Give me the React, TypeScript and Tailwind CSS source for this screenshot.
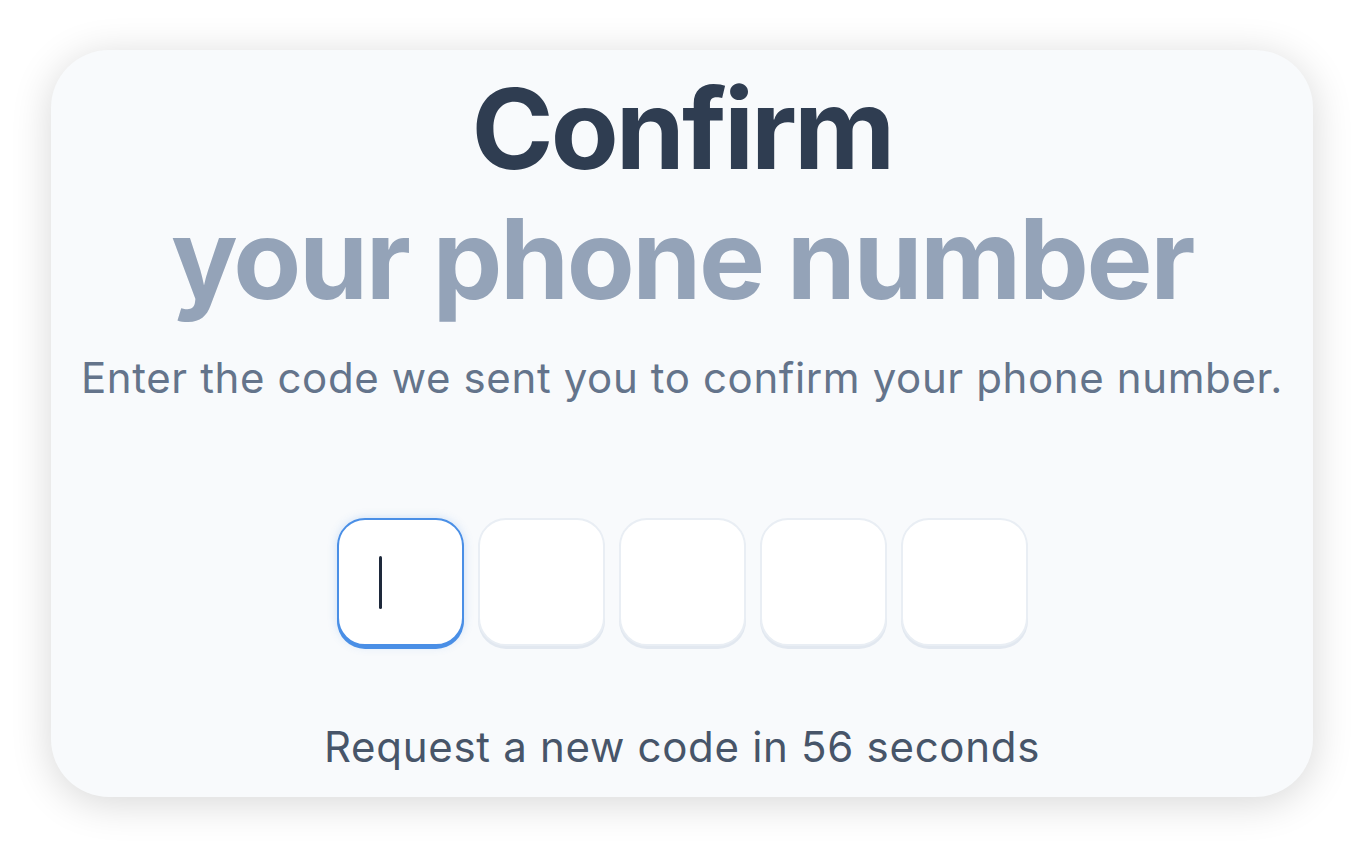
import React from "react";

export default function App() {
  const boxes = [0, 1, 2, 3, 4];
  return (
    <div className="w-[1365px] h-[849px] bg-white px-[51px] pt-[50px]" style={{ fontFamily: "Inter, 'Noto Sans', sans-serif" }}>
      <div className="w-[1262px] h-[747px] bg-[#f8fafc] rounded-[58px] shadow-[0_6px_40px_rgba(0,0,0,0.16)] flex flex-col items-center pt-[14px]">
        <h1 className="text-[111px] leading-[130px] font-bold text-[#2f3d51] tracking-[-3px]">Confirm</h1>
        <h2 className="text-[111px] leading-[130px] font-bold text-[#94a3b8] tracking-[-2.4px]">your phone number</h2>
        <p className="mt-[24px] text-[42px] leading-[59px] text-[#64748b] tracking-[0.62px]">Enter the code we sent you to confirm your phone number.</p>
        <div className="mt-[111px] flex gap-[14px]">
          {boxes.map((i) => (
            <div
              key={i}
              className={
                i === 0
                  ? "w-[127px] h-[128px] rounded-[28px] bg-white border-[2.5px] border-[#4a8fe6] shadow-[0_3px_0_#4a8fe6,0_0_10px_rgba(74,143,230,0.25)] flex items-center pl-[40px]"
                  : "w-[127px] h-[128px] rounded-[28px] bg-white border-2 border-[#e9eef4] shadow-[0_3px_0_#e2e8f0]"
              }
            >
              {i === 0 && <div className="w-[3px] h-[53px] bg-[#1e293b] rounded-full" />}
            </div>
          ))}
        </div>
        <p className="mt-[71px] text-[42px] leading-[59px] text-[#475569] tracking-[0.7px]">Request a new code in 56 seconds</p>
      </div>
    </div>
  );
}
